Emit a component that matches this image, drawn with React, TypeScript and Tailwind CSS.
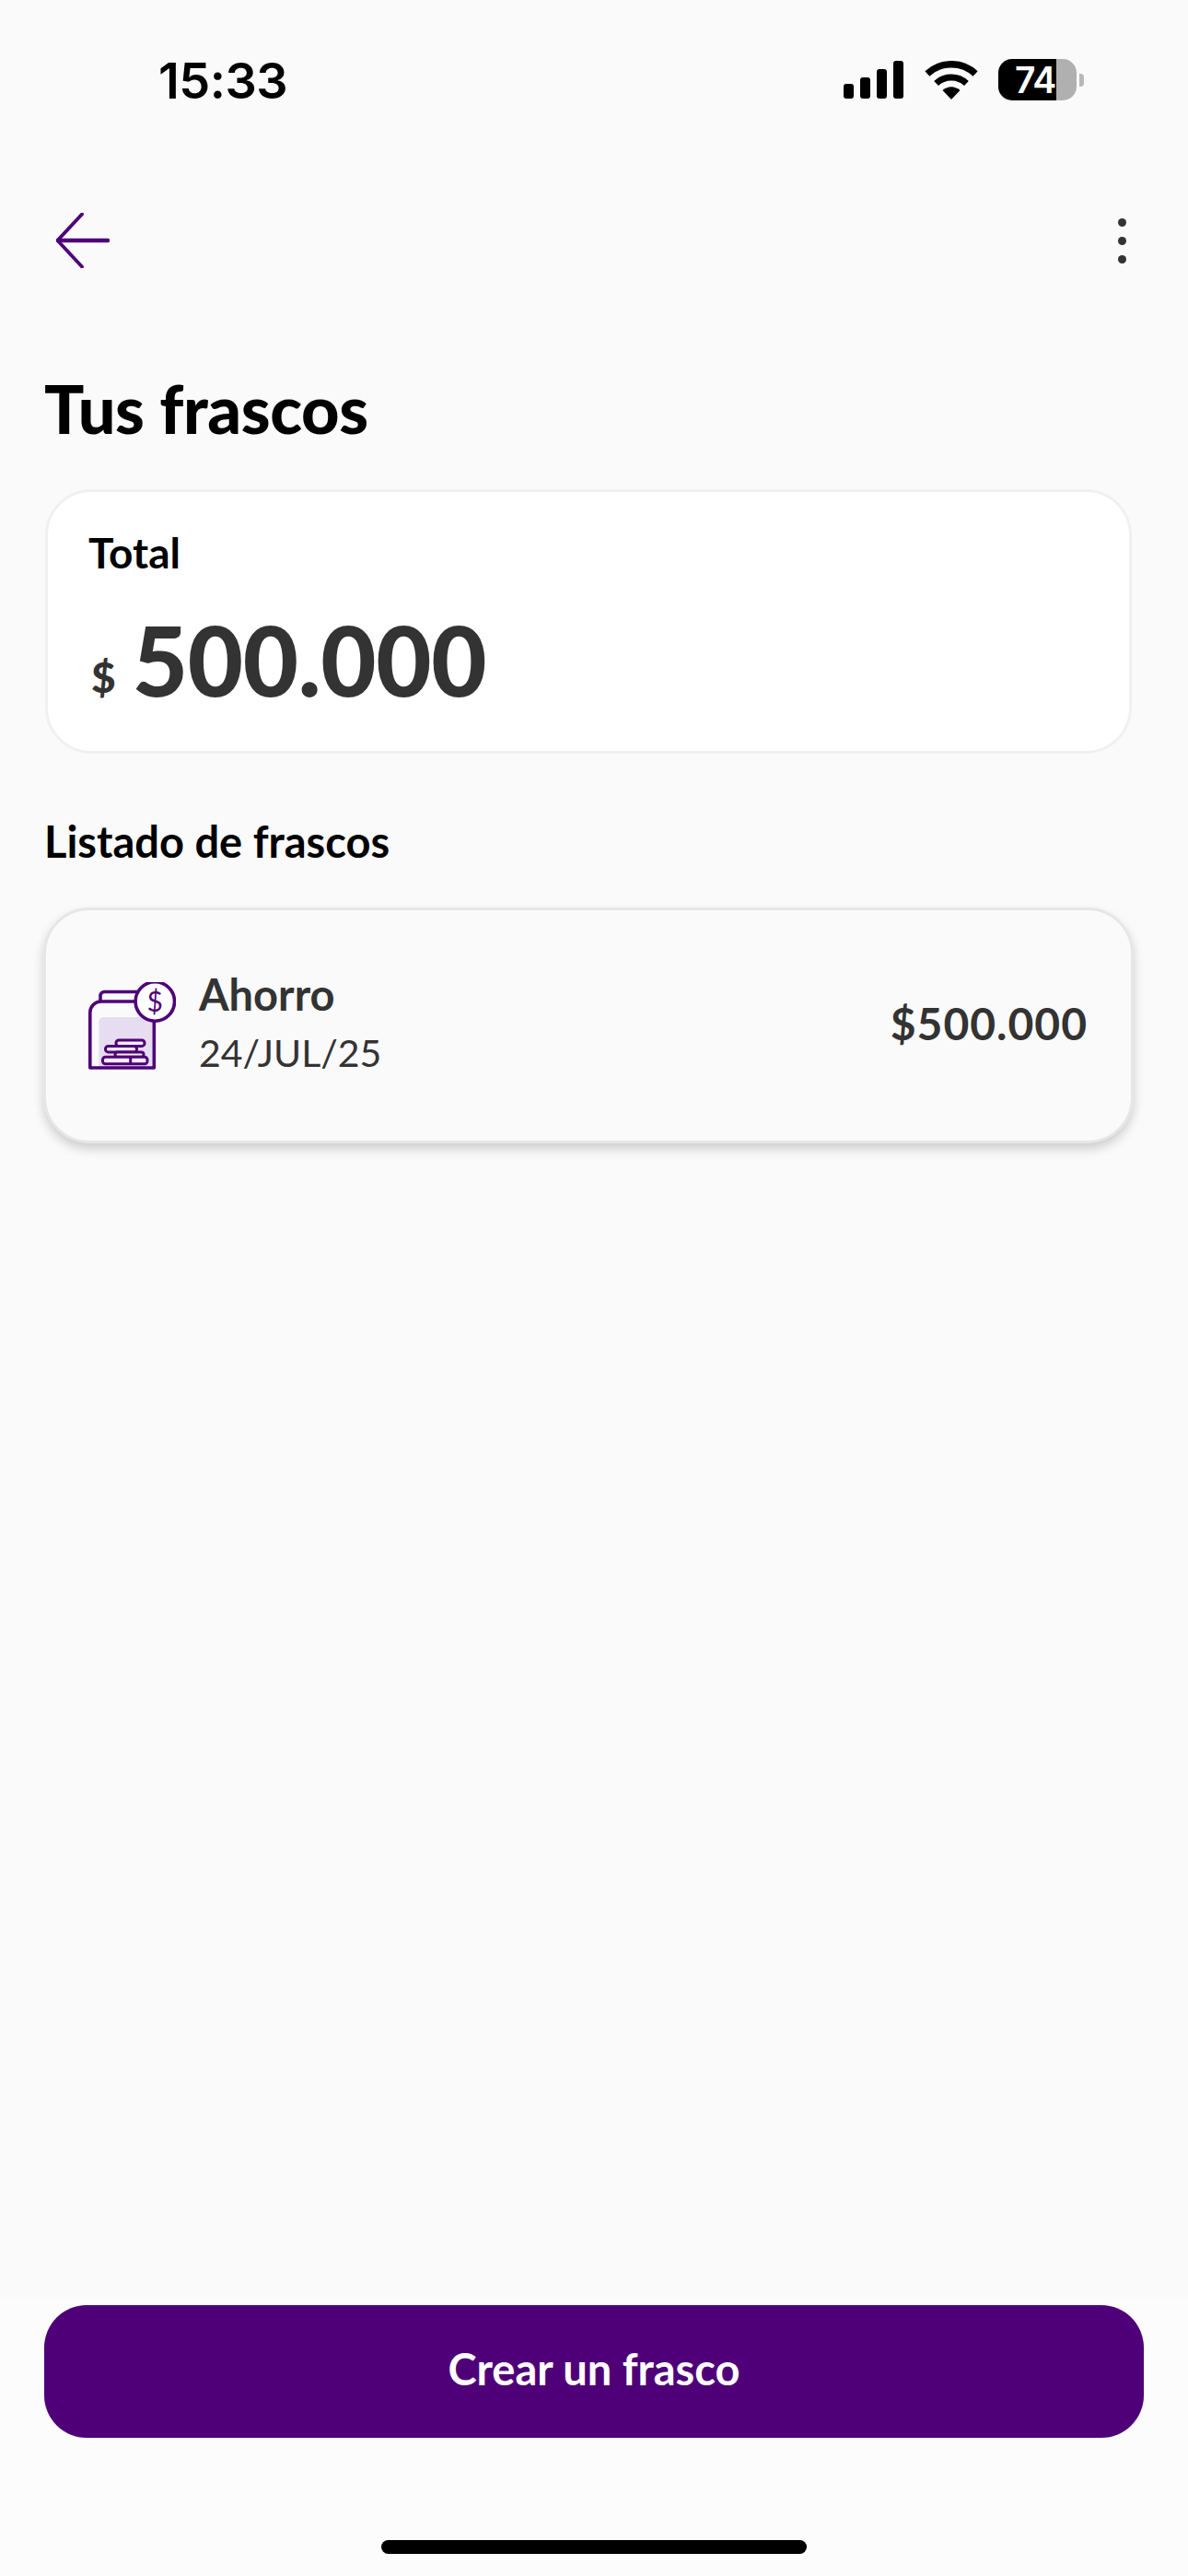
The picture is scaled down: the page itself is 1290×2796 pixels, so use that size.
import React from "react";

function JarIcon() {
  return (
    <svg width="95" height="95" viewBox="0 0 95 95" fill="none" className="shrink-0">
      <path d="M11.3 91V43a5 5 0 0 1 5-5h48a5 5 0 0 1 5 5v48z" fill="#e7ddf1" />
      <path d="M1.8 93V33a12 12 0 0 1 12-12H71.3V93z" stroke="#4f0078" strokeWidth="3.6" strokeLinejoin="round" />
      <path d="M13 21v-6a4.5 4.5 0 0 1 4.5-4.5H60" stroke="#4f0078" strokeWidth="3.6" />
      <g stroke="#4f0078" strokeWidth="3" fill="#f3edf8">
        <rect x="30" y="63" width="31" height="6.4" rx="3" />
        <rect x="18.5" y="69.5" width="34" height="6.4" rx="3" />
        <rect x="29" y="75.9" width="31" height="5.4" rx="2.6" />
        <rect x="15.5" y="81.3" width="48.5" height="7.4" rx="3" />
        <path d="M45.7 81.3v7.4" />
      </g>
      <circle cx="72.3" cy="21" r="21.2" fill="#ffffff" stroke="#4f0078" strokeWidth="3.6" />
      <text x="72.3" y="31.5" textAnchor="middle" fontSize="30" fontFamily="Lato, sans-serif" fill="#4f0078">$</text>
    </svg>
  );
}

function Signal() {
  return (
    <div className="flex items-end gap-[7px]">
      <div className="w-[11px] h-[16px] rounded-[3px] bg-black" />
      <div className="w-[11px] h-[23px] rounded-[3px] bg-black" />
      <div className="w-[11px] h-[32px] rounded-[3px] bg-black" />
      <div className="w-[11px] h-[41px] rounded-[3px] bg-black" />
    </div>
  );
}

function Wifi() {
  return (
    <svg width="58" height="42" viewBox="0 0 58 42" fill="none">
      <path d="M2.9 14A38.3 38.3 0 0 1 55.1 14" stroke="#000" strokeWidth="7.5" />
      <path d="M12.6 24.5A24 24 0 0 1 45.4 24.5" stroke="#000" strokeWidth="7" />
      <path d="M29 42L19.5 32Q29 24.5 38.5 32Z" fill="#000" />
    </svg>
  );
}

function Battery() {
  return (
    <div className="flex items-center gap-[3px]">
      <div className="relative w-[85px] h-[45px]">
        <div className="flex w-[85px] h-[45px] rounded-[15px] overflow-hidden">
          <div className="w-[63px] bg-black" />
          <div className="flex-1 bg-[#b0b0b0]" />
        </div>
        <span className="absolute left-[18px] top-0 h-[45px] flex items-center text-[39px] leading-none font-semibold text-white font-['Inter',sans-serif] tracking-[-1px]">74</span>
      </div>
      <div className="w-[5px] h-[14px] rounded-r-[4px] bg-[#b8b8b8]" />
    </div>
  );
}

export default function App() {
  return (
    <div className="w-[1290px] h-[2796px] bg-[#fafafa] flex flex-col font-['Lato',sans-serif] overflow-hidden">
      <div className="flex items-center justify-between h-[45px] mt-[64px] pl-[172px] pr-[113px]">
        <span className="text-[54px] leading-none font-semibold text-black font-['Inter',sans-serif] tracking-[-0.5px] pt-[2px]">15:33</span>
        <div className="flex items-center">
          <Signal />
          <div className="ml-[23px] mr-[22px]"><Wifi /></div>
          <Battery />
        </div>
      </div>

      <div className="flex items-center justify-between h-[58px] mt-[123px] pl-[61px] pr-[67px]">
        <svg width="58" height="60" viewBox="0 0 58 60" fill="none">
          <path d="M28 1.5L1.5 30L28 58.5" stroke="#4f0078" strokeWidth="3.8" strokeLinecap="round" strokeLinejoin="round" />
          <path d="M2 30H56" stroke="#4f0078" strokeWidth="4.6" strokeLinecap="round" />
        </svg>
        <div className="flex flex-col gap-[11px]">
          <div className="w-[9px] h-[9px] rounded-full bg-[#333333]" />
          <div className="w-[9px] h-[9px] rounded-full bg-[#333333]" />
          <div className="w-[9px] h-[9px] rounded-full bg-[#333333]" />
        </div>
      </div>

      <h1 className="mt-[112px] ml-[48px] text-[72px] leading-[82px] font-black text-black tracking-[-0.4px]">Tus frascos</h1>

      <div className="mt-[47px] ml-[49px] w-[1180px] h-[287px] rounded-[50px] bg-white border-[3px] border-[#f0f0f0] pl-[44px] pt-[38px]">
        <div className="text-[46px] leading-[56px] font-bold text-black">Total</div>
        <div className="mt-[33px] flex items-baseline gap-[18px] text-[#333333] font-black">
          <span className="text-[46px] leading-[110px] ml-[3px] -translate-y-[4px]">$</span>
          <span className="text-[104px] leading-[110px] tracking-[-0.3px]">500.000</span>
        </div>
      </div>

      <h2 className="mt-[67px] ml-[48px] text-[47px] leading-[56px] font-bold text-black">Listado de frascos</h2>

      <div className="mt-[44px] ml-[47px] w-[1184px] h-[256px] rounded-[50px] bg-[#fafafa] border-[3px] border-[#e6e6e6] shadow-[0_6px_12px_rgba(0,0,0,0.18)] pl-[46px] pr-[47px] flex items-center">
        <JarIcon />
        <div className="ml-[25px] mb-[4px] flex flex-col gap-[6px]">
          <span className="text-[47px] leading-[60px] font-bold text-[#333333] -mt-[2px]">Ahorro</span>
          <span className="text-[41px] leading-[56px] font-normal text-[#333333]">24/JUL/25</span>
        </div>
        <span className="ml-auto mb-[4px] text-[48px] leading-[60px] font-bold text-[#333333] tracking-[1px]">$500.000</span>
      </div>

      <div className="mt-auto h-[303px] bg-[#fcfcfc] flex flex-col items-center">
        <button className="mt-[9px] w-[1194px] h-[144px] rounded-[46px] bg-[#4f0078] text-white text-[47px] font-bold flex items-center justify-center pb-[5px] font-['Lato',sans-serif]">Crear un frasco</button>
        <div className="mt-[111px] w-[462px] h-[15px] rounded-full bg-black" />
      </div>
    </div>
  );
}
